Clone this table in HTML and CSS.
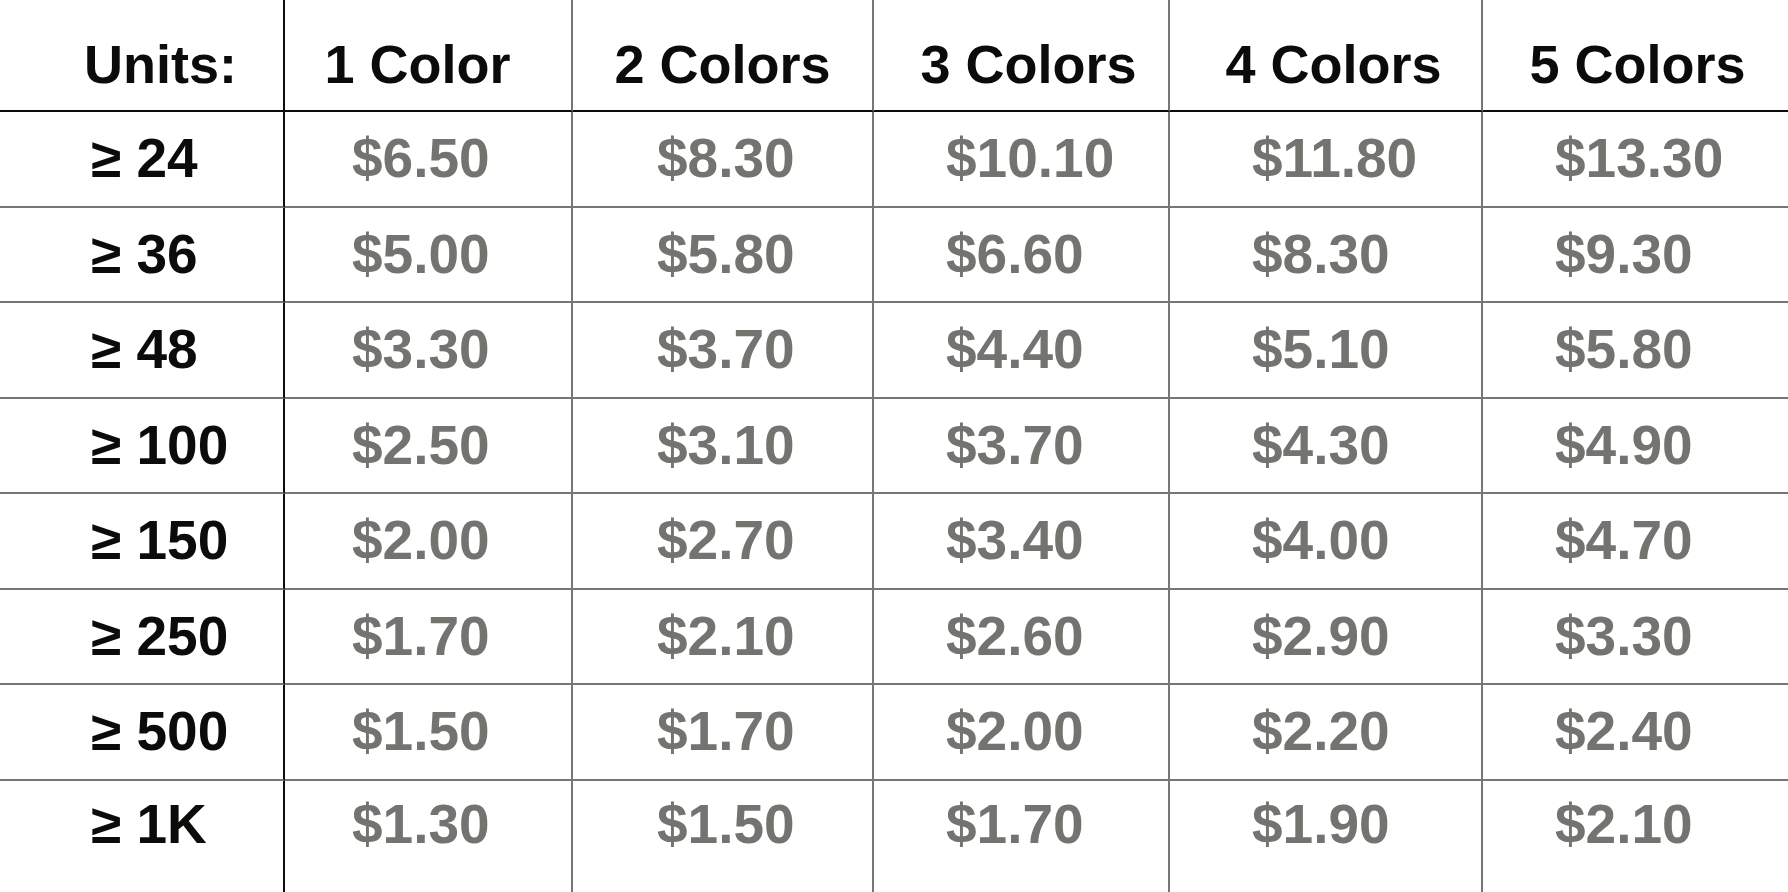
FILE: index.html
```html
<!DOCTYPE html>
<html lang="en">
<head>
<meta charset="utf-8">
<title>Pricing</title>
<link rel="stylesheet" href="styles.css">
</head>
<body>
<div class="table">
  <div class="cell head label">Units:</div>
  <div class="cell head">1 Color</div>
  <div class="cell head">2 Colors</div>
  <div class="cell head">3 Colors</div>
  <div class="cell head">4 Colors</div>
  <div class="cell head">5 Colors</div>

  <div class="cell label">≥ 24</div>
  <div class="cell price">$6.50</div>
  <div class="cell price">$8.30</div>
  <div class="cell price">$10.10</div>
  <div class="cell price">$11.80</div>
  <div class="cell price">$13.30</div>

  <div class="cell label">≥ 36</div>
  <div class="cell price">$5.00</div>
  <div class="cell price">$5.80</div>
  <div class="cell price">$6.60</div>
  <div class="cell price">$8.30</div>
  <div class="cell price">$9.30</div>

  <div class="cell label">≥ 48</div>
  <div class="cell price">$3.30</div>
  <div class="cell price">$3.70</div>
  <div class="cell price">$4.40</div>
  <div class="cell price">$5.10</div>
  <div class="cell price">$5.80</div>

  <div class="cell label">≥ 100</div>
  <div class="cell price">$2.50</div>
  <div class="cell price">$3.10</div>
  <div class="cell price">$3.70</div>
  <div class="cell price">$4.30</div>
  <div class="cell price">$4.90</div>

  <div class="cell label">≥ 150</div>
  <div class="cell price">$2.00</div>
  <div class="cell price">$2.70</div>
  <div class="cell price">$3.40</div>
  <div class="cell price">$4.00</div>
  <div class="cell price">$4.70</div>

  <div class="cell label">≥ 250</div>
  <div class="cell price">$1.70</div>
  <div class="cell price">$2.10</div>
  <div class="cell price">$2.60</div>
  <div class="cell price">$2.90</div>
  <div class="cell price">$3.30</div>

  <div class="cell label">≥ 500</div>
  <div class="cell price">$1.50</div>
  <div class="cell price">$1.70</div>
  <div class="cell price">$2.00</div>
  <div class="cell price">$2.20</div>
  <div class="cell price">$2.40</div>

  <div class="cell label last">≥ 1K</div>
  <div class="cell price last">$1.30</div>
  <div class="cell price last">$1.50</div>
  <div class="cell price last">$1.70</div>
  <div class="cell price last">$1.90</div>
  <div class="cell price last">$2.10</div>
</div>
</body>
</html>
```

FILE: styles.css
```css
html, body {
  margin: 0;
  padding: 0;
  background: #ffffff;
  overflow: hidden;
}

body {
  width: 1788px;
  height: 892px;
}

.table {
  display: grid;
  grid-template-columns: 285px 288px 301px 296px 313px 305px;
  grid-template-rows: 112px repeat(7, 95.5px) 112px;
  font-family: "Liberation Sans", Arial, Helvetica, sans-serif;
  font-weight: 700;
  font-size: 55px;
  line-height: 1;
}

.cell {
  box-sizing: border-box;
  display: flex;
  align-items: center;
  justify-content: flex-start;
  border-right: 2px solid #767674;
  border-bottom: 2px solid #767674;
  white-space: nowrap;
  color: #0b0b09;
}

.cell:nth-child(6n+1) {
  border-right-color: #0d0d0b;
}

.cell:nth-child(6n) {
  border-right: none;
}

/* header row */
.head {
  font-size: 54px;
  justify-content: center;
  border-bottom-color: #0d0d0b;
  padding-top: 17px;
}

.head:nth-child(2) {
  padding-right: 21px;
}

.head:nth-child(4) {
  padding-left: 15px;
}

.head:nth-child(5) {
  padding-left: 16px;
}

.head:nth-child(6) {
  padding-left: 4px;
}

/* first column */
.label {
  padding-left: 91px;
}

.head.label {
  justify-content: flex-start;
  padding-left: 84px;
}

/* price columns, left aligned */
.price {
  color: #737370;
}

.price:nth-child(6n+2) {
  padding-left: 67px;
}

.price:nth-child(6n+3) {
  padding-left: 84px;
}

.price:nth-child(6n+4) {
  padding-left: 72px;
}

.price:nth-child(6n+5) {
  padding-left: 82px;
}

.price:nth-child(6n) {
  padding-left: 72px;
}

.last {
  border-bottom: none;
  padding-bottom: 24px;
}
```
